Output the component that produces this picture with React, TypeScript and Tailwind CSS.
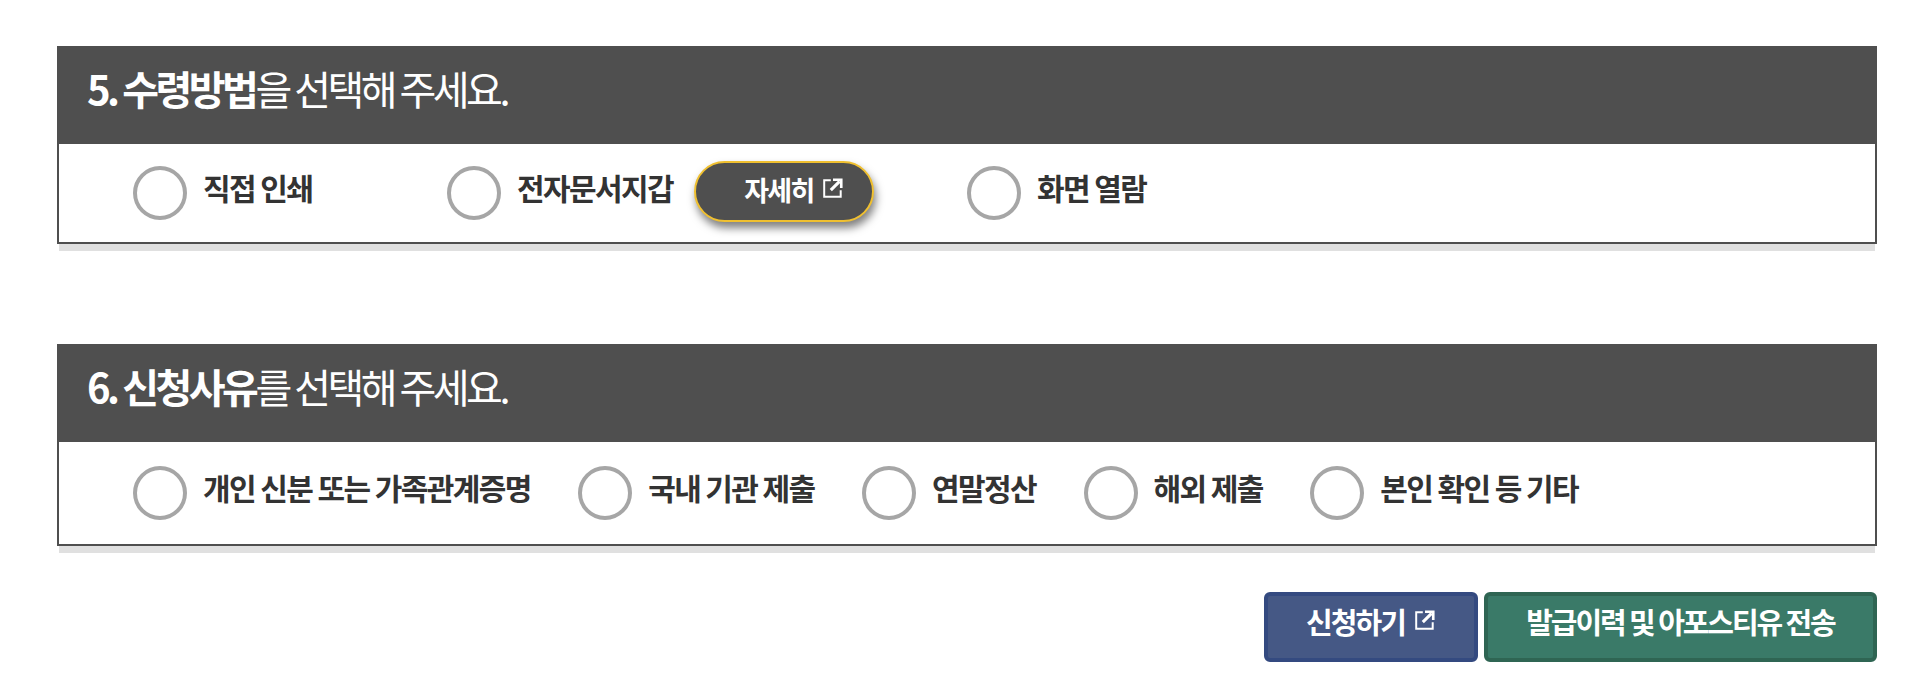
import React from 'react';

const font = { fontFamily: '"Noto Sans CJK KR", "Noto Sans", sans-serif' };

function ExternalIcon({ className }: { className?: string }) {
  return (
    <svg viewBox="0 0 20 20" className={className} fill="none" stroke="currentColor">
      <path d="M8 3H2v15h15v-6" strokeWidth="1.8" />
      <path d="M8 12L16 4" strokeWidth="2.8" />
      <path d="M10 2.5h7.5V10" strokeWidth="2.4" />
    </svg>
  );
}

function Radio({ label, className }: { label: string; className?: string }) {
  return (
    <label className={`flex items-center ${className ?? ''}`}>
      <span className="block w-[54px] h-[54px] shrink-0 rounded-full border-[4px] border-[#a6a6a6] bg-white blur-[0.4px]" />
      <span className="ml-[16px] text-[30px] font-bold tracking-[-1.6px] text-[#333] mb-[12px] whitespace-nowrap">{label}</span>
    </label>
  );
}

function Section({ bold, rest, children, bodyClass }: { bold: string; rest: string; children: React.ReactNode; bodyClass: string }) {
  return (
    <section className="border-2 border-[#4f4f4f] bg-white shadow-[0_9px_0_-2px_#e0e0e0]">
      <h2 className="h-[96px] flex items-center pl-[28px] pb-[16px] bg-[#4f4f4f] text-white text-[40px] font-normal tracking-[-3.5px]">
        <strong className="font-bold">{bold}</strong>
        {rest}
      </h2>
      <div className={`flex items-center pl-[74px] ${bodyClass}`}>{children}</div>
    </section>
  );
}

export default function App() {
  return (
    <div className="w-[1918px] h-[694px] bg-white pl-[57px] pr-[41px] pt-[46px]" style={font}>
      <Section bold="5. 수령방법" rest="을 선택해 주세요." bodyClass="h-[98px]">
        <Radio label="직접 인쇄" className="w-[314px]" />
        <Radio label="전자문서지갑" />
        <button className="ml-[21px] w-[180px] h-[61px] -mt-[3px] flex items-center justify-center gap-[8px] rounded-full border-2 border-[#f0c030] bg-[#4f4f4f] text-white text-[27px] font-bold tracking-[-1.6px] shadow-[2px_6px_8px_rgba(0,0,0,0.5)]">
          <span className="ml-[20px] mb-[3px]">자세히</span>
          <ExternalIcon className="w-[22px] h-[22px] mb-[8px]" />
        </button>
        <Radio label="화면 열람" className="ml-[93px]" />
      </Section>

      <div className="mt-[100px]">
        <Section bold="6. 신청사유" rest="를 선택해 주세요." bodyClass="h-[102px]">
          <Radio label="개인 신분 또는 가족관계증명" className="mr-[47.5px]" />
          <Radio label="국내 기관 제출" className="mr-[47.5px]" />
          <Radio label="연말정산" className="mr-[47.5px]" />
          <Radio label="해외 제출" className="mr-[47.5px]" />
          <Radio label="본인 확인 등 기타" />
        </Section>
      </div>

      <div className="mt-[46px] flex justify-end gap-[6px]">
        <button className="w-[214px] h-[70px] flex items-center justify-center gap-[9px] rounded-[6px] border-[4px] border-[#344a80] bg-[#455885] text-white text-[29px] font-bold tracking-[-1.9px]">
          <span className="mb-[10px]">신청하기</span>
          <ExternalIcon className="w-[22px] h-[22px] mb-[14px]" />
        </button>
        <button className="w-[393px] h-[70px] flex items-center justify-center rounded-[6px] border-[4px] border-[#2f6553] bg-[#3a7a68] text-white text-[29px] font-bold tracking-[-2.1px]">
          <span className="mb-[10px]">발급이력 및 아포스티유 전송</span>
        </button>
      </div>
    </div>
  );
}
